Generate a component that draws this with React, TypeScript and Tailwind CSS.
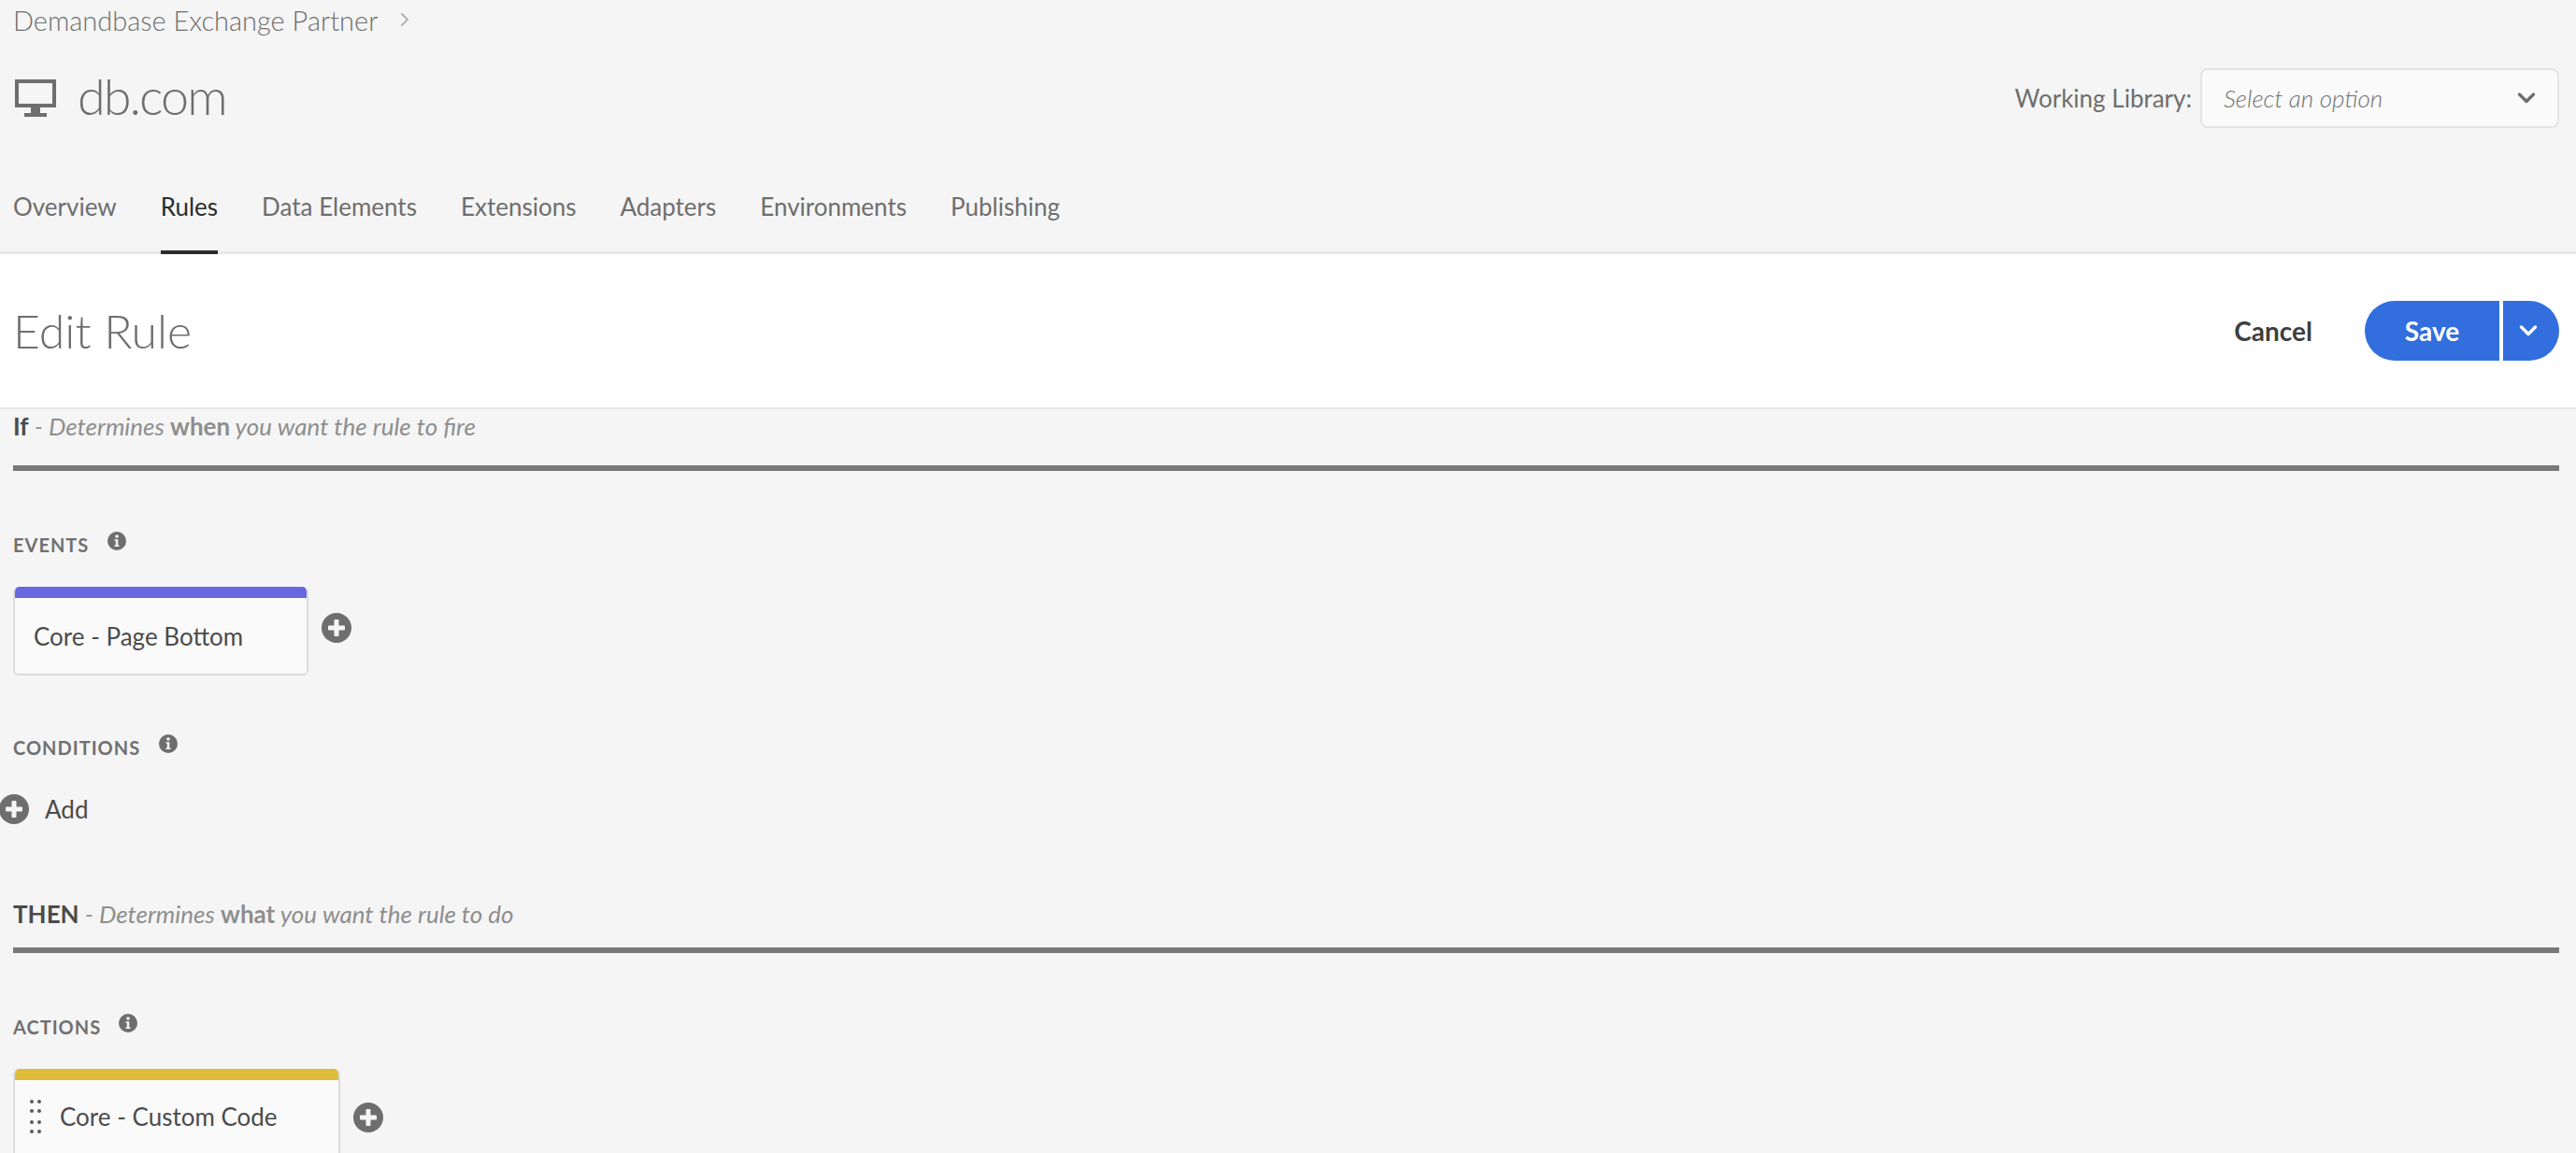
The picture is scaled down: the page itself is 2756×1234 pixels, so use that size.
import React from "react";

const font = { fontFamily: '"Lato", "Open Sans", sans-serif' };

function PlusCircle({ className = "" }: { className?: string }) {
  return (
    <svg viewBox="0 0 32 32" className={className}>
      <circle cx="16" cy="16" r="16" fill="#6e6e6e" />
      <rect x="7" y="13.5" width="18" height="5" rx="1" fill="#f5f5f5" />
      <rect x="13.5" y="7" width="5" height="18" rx="1" fill="#f5f5f5" />
    </svg>
  );
}

function Info({ className = "" }: { className?: string }) {
  return (
    <svg viewBox="0 0 20 20" className={className}>
      <circle cx="10" cy="10" r="10" fill="#6e6e6e" />
      <circle cx="10" cy="5" r="1.8" fill="#f5f5f5" />
      <path d="M7.5 8.2h3.8v6.2h1.2v1.6h-5v-1.6h1.3v-4.6h-1.3z" fill="#f5f5f5" />
    </svg>
  );
}

function Chevron({ stroke, className = "" }: { stroke: string; className?: string }) {
  return (
    <svg viewBox="0 0 20 14" className={className} fill="none">
      <path d="M2.5 3 L10 10.5 L17.5 3" stroke={stroke} strokeWidth="3.4" strokeLinecap="round" strokeLinejoin="round" />
    </svg>
  );
}

function SectionHead({ label, note, strong, rest, className = "" }: { label: string; note: string; strong: string; rest: string; className?: string }) {
  return (
    <div className={className}>
      <div className="flex h-[40px] items-center text-[26px] leading-none whitespace-pre">
        <span className="font-bold text-[#4b4b4b]">{label}</span>
        <span className="italic font-normal text-[#8e8e8e]">{` - ${note} `}</span>
        <span className="font-bold text-[#8e8e8e]">{strong}</span>
        <span className="italic font-normal text-[#8e8e8e]">{` ${rest}`}</span>
      </div>
      <div className="h-[6px] bg-[#787878]" />
    </div>
  );
}

function Label({ text, gapClass }: { text: string; gapClass: string }) {
  return (
    <div className="flex h-[22px] items-center">
      <span className="text-[20px] font-bold tracking-[1px] leading-none text-[#707070]">{text}</span>
      <Info className={`${gapClass} -mt-[8px] h-[20px] w-[20px]`} />
    </div>
  );
}

const tabs = ["Overview", "Rules", "Data Elements", "Extensions", "Adapters", "Environments", "Publishing"];

export default function App() {
  return (
    <div style={font} className="flex h-[1234px] w-full flex-col overflow-hidden bg-[#f5f5f5]">
      <header className="h-[272px] shrink-0 border-b-[3px] border-[#e8e8e8]">
        <div className="flex h-[42px] items-center px-[14px]">
          <span className="text-[29px] font-light leading-none text-[#6e6e6e]">Demandbase Exchange Partner</span>
          <svg viewBox="0 0 10 16" className="ml-[24px] h-[16px] w-[10px]" fill="none">
            <path d="M2 2 L8 8 L2 14" stroke="#b3b3b3" strokeWidth="2" strokeLinecap="round" strokeLinejoin="round" />
          </svg>
        </div>
        <div className="flex h-[126px] items-center justify-between pl-[16px] pr-[18px]">
          <div className="flex items-center">
            <svg viewBox="0 0 44 40" className="h-[40px] w-[44px]">
              <path fillRule="evenodd" d="M0 0h44v30H0z M4 4v22h36V4z" fill="#6e6e6e" />
              <rect x="17" y="30" width="10" height="6" fill="#6e6e6e" />
              <rect x="10" y="36" width="24" height="4" fill="#6e6e6e" />
            </svg>
            <span className="ml-[23px] -mt-[4px] text-[54px] font-light tracking-[-2px] leading-none text-[#6e6e6e]">db.com</span>
          </div>
          <div className="flex items-center">
            <span className="text-[26px] font-normal leading-none text-[#6e6e6e]">Working Library:</span>
            <div className="ml-[9px] flex h-[64px] w-[384px] items-center justify-between rounded-[8px] border-2 border-[#e4e4e4] bg-[#fafafa] pl-[23px] pr-[23px]">
              <span className="text-[26px] italic font-light leading-none text-[#707070]">Select an option</span>
              <Chevron stroke="#6e6e6e" className="h-[14px] w-[20px]" />
            </div>
          </div>
        </div>
        <nav className="flex h-[104px] gap-[47px] px-[14px]">
          {tabs.map((t) => (
            <div
              key={t}
              className={
                t === "Rules"
                  ? "flex h-[104px] items-center border-b-[4px] border-[#2c2c2c] text-[26px] leading-none text-[#2c2c2c]"
                  : "flex h-[104px] items-center border-b-[4px] border-transparent text-[26px] leading-none text-[#6e6e6e]"
              }
            >
              <span className="pt-[6px]">{t}</span>
            </div>
          ))}
        </nav>
      </header>

      <div className="flex h-[166px] shrink-0 items-center justify-between border-b-2 border-[#e6e6e6] bg-white pl-[14px] pr-[18px]">
        <span className="text-[50px] font-light leading-none text-[#6e6e6e]">Edit Rule</span>
        <div className="flex items-center">
          <span className="text-[28px] font-bold leading-none text-[#3f3f3f]">Cancel</span>
          <div className="ml-[56px] flex h-[64px] items-center">
            <div className="flex h-[64px] w-[144px] items-center justify-center rounded-l-[32px] bg-[#326ede] text-[28px] font-bold leading-none text-white">Save</div>
            <div className="ml-[4px] flex h-[64px] w-[60px] items-center justify-center rounded-r-[32px] bg-[#326ede] pr-[6px]">
              <Chevron stroke="#ffffff" className="h-[14px] w-[20px]" />
            </div>
          </div>
        </div>
      </div>

      <main className="flex-1 px-[14px] pr-[18px]">
        <SectionHead label="If" note="Determines" strong="when" rest="you want the rule to fire" className="pt-0 [&>div:first-child]:h-[36px] [&>div:last-child]:mt-[24px]" />

        <div className="mt-[68px]">
          <Label text="EVENTS" gapClass="ml-[20px]" />
          <div className="mt-[34px] flex items-center">
            <div className="h-[95px] w-[316px] overflow-hidden rounded-[6px] border-2 border-t-0 border-[#dcdcdc] bg-[#fafafa]">
              <div className="-mx-[2px] h-[12px] bg-[#6767e0]" />
              <div className="flex h-[81px] items-center pl-[20px] text-[26px] leading-none text-[#4b4b4b]">Core - Page Bottom</div>
            </div>
            <PlusCircle className="ml-[14px] mt-[-8px] h-[32px] w-[32px]" />
          </div>
        </div>

        <div className="mt-[66px]">
          <Label text="CONDITIONS" gapClass="ml-[20px]" />
          <div className="-ml-[14px] mt-[39px] flex items-center">
            <PlusCircle className="-ml-[1px] h-[32px] w-[32px]" />
            <span className="ml-[17px] text-[26px] leading-none text-[#4b4b4b]">Add</span>
          </div>
        </div>

        <SectionHead label="THEN" note="Determines" strong="what" rest="you want the rule to do" className="mt-[76px] [&>div:last-child]:mt-[16px]" />

        <div className="mt-[68px]">
          <Label text="ACTIONS" gapClass="ml-[19px]" />
          <div className="mt-[34px] flex items-start">
            <div className="h-[150px] w-[350px] overflow-hidden rounded-t-[6px] border-x-2 border-[#dcdcdc] bg-[#fafafa]">
              <div className="-mx-[2px] h-[12px] bg-[#dcbc39]" />
              <div className="flex h-[78px] items-center pl-[16px]">
                <svg viewBox="0 0 12 36" className="h-[36px] w-[12px]">
                  {[2, 12, 24, 34].map((y) => (
                    <g key={y}>
                      <circle cx="2" cy={y} r="2" fill="#5a5a5a" />
                      <circle cx="10" cy={y} r="2" fill="#5a5a5a" />
                    </g>
                  ))}
                </svg>
                <span className="ml-[20px] text-[26px] leading-none text-[#4b4b4b]">Core - Custom Code</span>
              </div>
            </div>
            <PlusCircle className="ml-[14px] mt-[36px] h-[32px] w-[32px]" />
          </div>
        </div>
      </main>
    </div>
  );
}
